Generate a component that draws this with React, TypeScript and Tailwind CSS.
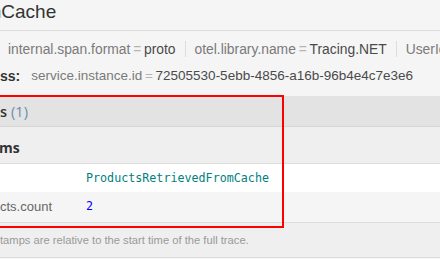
export default function App() {
  return (
    <div className="relative w-[440px] h-[259px] overflow-hidden bg-[#f5f5f5] font-['Liberation_Sans',Arial,sans-serif] text-[#333]">
      {/* span title */}
      <div className="h-[31px] border-b border-[#dcdcdc] pt-[1px] whitespace-nowrap">
        <span className="ml-[-14.5px] text-[19px] leading-[22px]">mCache</span>
      </div>

      {/* tags summary */}
      <div className="pt-[8px] whitespace-nowrap">
        <div className="flex items-center leading-[20px] text-[13.85px]">
          <Tag first k="internal.span.format" v="proto" />
          <Tag k="otel.library.name" v="Tracing.NET" />
          <Tag k="UserId" v="1" />
        </div>
        <div className="flex items-center leading-[20px] mt-[7px] text-[13.5px]">
          <span className="font-bold text-[14px]">ss:</span>
          <span className="ml-[11px] text-[#7a7a7a]">service.instance.id</span>
          <span className="px-[0.2em] text-[#b5b5b5]">=</span>
          <span className="text-[#4a4a4a]">72505530-5ebb-4856-a16b-96b4e4c7e3e6</span>
        </div>
      </div>

      {/* logs accordion */}
      <div className="mt-[10px]">
        <div className="h-[31px] bg-[#e3e3e3] border-t border-[#e3e3e3] border-b border-b-[#d6d6d6] flex items-center whitespace-nowrap font-['Open_Sans',sans-serif] text-[14.5px] pt-[1px]">
          <span className="font-semibold text-[#333]">s</span>
          <span className="ml-[4px] text-[#6b8bb0]">(1)</span>
        </div>
        <div className="h-[37px] bg-[#efefef] border-b border-[#dddddd] flex items-center pt-[5px] font-['Open_Sans',sans-serif] text-[14px]">
          <span className="font-bold text-[#333] ml-[-1px]">ms</span>
        </div>
        <div className="h-[28px] bg-white flex items-center pt-[1px]">
          <span className="w-[86px] shrink-0" />
          <span className="font-['DejaVu_Sans_Mono',monospace] text-[11.7px] text-[#008080]">
            ProductsRetrievedFromCache
          </span>
        </div>
        <div className="h-[31px] bg-[#f5f5f5] border-b border-[#dddddd] flex items-center">
          <span className="w-[86px] shrink-0 text-[13px] text-[#666] whitespace-nowrap">cts.count</span>
          <span className="font-['DejaVu_Sans_Mono',monospace] text-[11.7px] text-[#0000ff]">2</span>
        </div>
        <div className="h-[35px] bg-[#efefef] border-b border-[#dddddd] flex items-center whitespace-nowrap">
          <span className="text-[11.2px] text-[#999]">
            tamps are relative to the start time of the full trace.
          </span>
        </div>
      </div>

      {/* highlight */}
      <div className="absolute left-[-4px] top-[95px] w-[288px] h-[133px] border-2 border-[#ff0000] pointer-events-none" />
    </div>
  );
}

function Tag({ k, v, first }: { k: string; v: string; first?: boolean }) {
  return (
    <span
      className={
        first
          ? "pl-[8px] pr-[9px]"
          : "pl-[9px] pr-[9px] border-l border-[#dddddd] leading-[16px]"
      }
    >
      <span className="text-[#7a7a7a]">{k}</span>
      <span className="px-[0.2em] text-[#b5b5b5]">=</span>
      <span className="text-[#4a4a4a]">{v}</span>
    </span>
  );
}
